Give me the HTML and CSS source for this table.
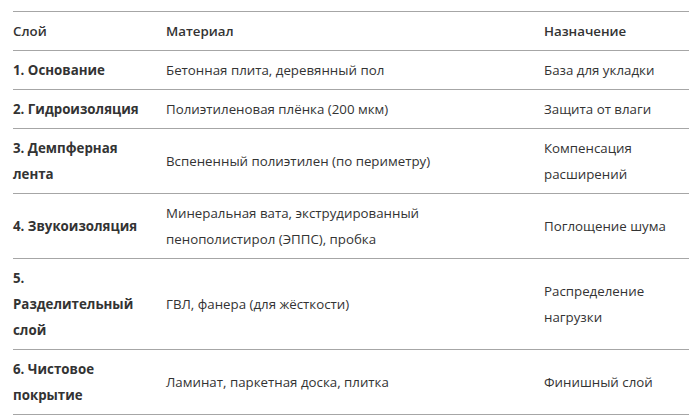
FILE: index.html
```html
<!DOCTYPE html>
<html lang="ru">
<head>
<meta charset="utf-8">
<link rel="stylesheet" href="styles.css">
</head>
<body>
<table class="layers">
  <colgroup>
    <col class="c1"><col class="c2"><col class="c3">
  </colgroup>
  <thead>
    <tr><th>Слой</th><th>Материал</th><th>Назначение</th></tr>
  </thead>
  <tbody>
    <tr><td class="name">1. Основание</td><td>Бетонная плита, деревянный пол</td><td>База для укладки</td></tr>
    <tr><td class="name">2. Гидроизоляция</td><td>Полиэтиленовая плёнка (200 мкм)</td><td>Защита от влаги</td></tr>
    <tr><td class="name">3. Демпферная лента</td><td>Вспененный полиэтилен (по периметру)</td><td>Компенсация расширений</td></tr>
    <tr><td class="name">4. Звукоизоляция</td><td>Минеральная вата, экструдированный пенополистирол (ЭППС), пробка</td><td>Поглощение шума</td></tr>
    <tr><td class="name">5. Разделительный слой</td><td>ГВЛ, фанера (для жёсткости)</td><td>Распределение нагрузки</td></tr>
    <tr><td class="name">6. Чистовое покрытие</td><td>Ламинат, паркетная доска, плитка</td><td>Финишный слой</td></tr>
  </tbody>
</table>
</body>
</html>
```

FILE: styles.css
```css
html, body {
  margin: 0;
  background: #ffffff;
}
body {
  padding: 11px 7px 0 13px;
  font-family: "Open Sans", "Noto Sans", sans-serif;
  font-size: 13.3px;
  color: #333333;
}
.layers {
  width: 676px;
  table-layout: fixed;
  border-collapse: collapse;
  border-top: 1px solid #a6a6a6;
}
.c1 { width: 153px; }
.c2 { width: 378px; }
.c3 { width: 145px; }
.layers th,
.layers td {
  text-align: left;
  vertical-align: middle;
  padding: 6px 0;
  line-height: 26px;
  border-bottom: 1px solid #a6a6a6;
}
.layers th:first-child,
.layers td:first-child {
  padding-right: 24px;
}
.layers th:nth-child(2),
.layers td:nth-child(2) {
  padding-right: 30px;
}
.layers th:last-child,
.layers td:last-child {
  padding-right: 12px;
}
.layers th {
  font-weight: 600;
}
.layers td.name {
  font-weight: 700;
}
```
